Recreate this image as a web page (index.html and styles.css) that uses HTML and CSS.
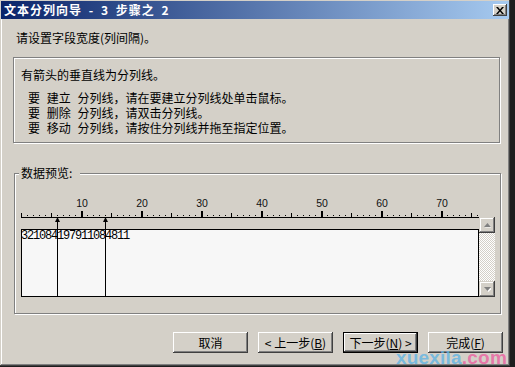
FILE: index.html
```html
<!DOCTYPE html>
<html lang="zh-CN">
<head>
  <meta charset="UTF-8">
  <title>文本分列向导</title>
  <link rel="stylesheet" href="styles.css">
</head>
<body>
  <div class="window">
    <div class="titlebar">
      <span class="title">文本分列向导 - 3 步骤之 2</span>
      <span class="close">
        <svg width="8" height="7" viewBox="0 0 8 7"><path d="M0 0h2l2 2.5L6 0h2L5 3.5 8 7H6L4 4.5 2 7H0l3-3.5z" fill="#000"/></svg>
      </span>
    </div>

    <div class="content">
      <p class="intro">请设置字段宽度(列间隔)。</p>

      <div class="info">
        <p>有箭头的垂直线为分列线。</p>
        <ul>
          <li>要 建立 分列线，请在要建立分列线处单击鼠标。</li>
          <li>要 删除 分列线，请双击分列线。</li>
          <li>要 移动 分列线，请按住分列线并拖至指定位置。</li>
        </ul>
      </div>

      <div class="group">
        <div class="group-title">数据预览:</div>
        <div class="viewer">
          <div class="viewer-main">
            <svg class="ruler" width="458" height="33" viewBox="0 0 458 33">
              <defs>
                <pattern id="dots" patternUnits="userSpaceOnUse" width="6" height="1"><rect width="1" height="1" fill="#000"/></pattern>
                <pattern id="fives" patternUnits="userSpaceOnUse" x="30" width="60" height="4"><rect width="1" height="4" fill="#000"/></pattern>
                <pattern id="tens" patternUnits="userSpaceOnUse" width="60" height="6"><rect width="2" height="6" fill="#000"/></pattern>
              </defs>
              <rect x="0" y="19" width="458" height="1" fill="url(#dots)"/>
              <rect x="30" y="17" width="428" height="4" fill="url(#fives)"/>
              <rect x="60" y="15" width="398" height="6" fill="url(#tens)"/>
              <rect x="0" y="17" width="1" height="4" fill="#000"/>
              <rect x="0" y="21" width="458" height="1" fill="#000"/>
              <g class="ruler-nums" text-anchor="middle">
                <text x="61" y="11">10</text>
                <text x="121" y="11">20</text>
                <text x="181" y="11">30</text>
                <text x="241" y="11">40</text>
                <text x="301" y="11">50</text>
                <text x="361" y="11">60</text>
                <text x="421" y="11">70</text>
              </g>
              <path d="M36.5 21V33M84.5 21V33" stroke="#000"/>
              <path d="M34 26L36.5 21 39 26zM82 26L84.5 21 87 26z" fill="#000"/>
            </svg>
            <div class="data">
              <div class="data-row">321084197911084811</div>
              <span class="break b1"></span>
              <span class="break b2"></span>
            </div>
          </div>
          <div class="scrollbar">
            <span class="sb-btn">
              <svg width="7" height="5" viewBox="0 0 7 5"><path d="M4.5 1L8 4.5H1z" fill="#fff"/><path d="M3.5 0L7 4H0z" fill="#808080"/></svg>
            </span>
            <span class="sb-btn">
              <svg width="7" height="5" viewBox="0 0 7 5"><path d="M1 1h7L4.5 5z" fill="#fff"/><path d="M0 0h7L3.5 4z" fill="#808080"/></svg>
            </span>
          </div>
        </div>
      </div>

      <div class="buttons">
        <button class="button">取消</button>
        <button class="button">&lt; 上一步(<u>B</u>)</button>
        <button class="button default">下一步(<u>N</u>) &gt;</button>
        <button class="button">完成(<u>F</u>)</button>
      </div>
    </div>

    <div class="watermark"><span class="wm-a">xuexila</span><span class="wm-b">.com</span></div>
  </div>
</body>
</html>
```

FILE: styles.css
```css
html, body {
  margin: 0;
  padding: 0;
}

body {
  width: 515px;
  height: 367px;
  overflow: hidden;
  background-color: #1e1e1e;
  font-family: "Noto Sans CJK SC", "Liberation Sans", sans-serif;
  font-size: 12px;
  color: #000;
}

.window {
  position: relative;
  width: 510px;
  height: 366px;
  box-sizing: border-box;
  padding: 1px;
  background-color: #d4d0c8;
  box-shadow: inset -1px -1px #404040, inset 1px 1px #d4d0c8, inset -2px -2px #808080, inset 2px 2px #fff;
}

.titlebar {
  height: 18px;
  display: flex;
  align-items: center;
  justify-content: space-between;
  padding-left: 3px;
  background: linear-gradient(to right, #0a246a, #a6caf0);
  color: #fff;
  font-weight: bold;
  letter-spacing: 1px;
  word-spacing: 3px;
  line-height: 18px;
}

.close {
  width: 14px;
  height: 12px;
  margin-right: 2px;
  display: flex;
  align-items: center;
  justify-content: center;
  background-color: #d4d0c8;
  box-shadow: inset -1px -1px #404040, inset 1px 1px #fff, inset -2px -2px #808080;
}

.content {
  padding: 12px 6px 0 12px;
}

.intro {
  margin: 0 0 0 3px;
  line-height: 14px;
}

.info {
  margin-top: 12px;
  width: 487px;
  height: 86px;
  box-sizing: border-box;
  padding: 9px 0 0 7px;
  border: 1px solid #808080;
  box-shadow: inset 1px 1px #fff, 1px 1px #fff;
}

.info p {
  margin: 0;
  line-height: 15px;
}

.info ul {
  margin: 8px 0 0;
  padding-left: 7px;
  list-style: none;
  line-height: 15px;
  word-spacing: 4px;
}

.group {
  margin: 30px 0 0 1px;
  width: 487px;
  height: 141px;
  box-sizing: border-box;
  padding-left: 6px;
  border: 1px solid #808080;
  box-shadow: inset 1px 1px #fff, 1px 1px #fff;
}

.group-title {
  display: table;
  margin: -8px 0 0 -2px;
  padding: 0 8px 0 2px;
  line-height: 14px;
  background-color: #d4d0c8;
}

.viewer {
  display: flex;
  align-items: flex-end;
  margin-top: 16px;
}

.viewer-main {
  width: 458px;
}

.ruler {
  display: block;
}

.ruler-nums {
  font-family: "Liberation Sans", sans-serif;
  font-size: 10.5px;
  fill: #111;
}

.data {
  position: relative;
  height: 68px;
  box-sizing: border-box;
  border: 1px solid #000;
  background-color: #f7f7f7;
}

.data-row {
  font-family: "Liberation Mono", monospace;
  font-size: 12px;
  letter-spacing: -1.2px;
  line-height: 12px;
  margin-left: -1px;
}

.break {
  position: absolute;
  top: 0;
  bottom: 0;
  width: 1px;
  background-color: #000;
}

.b1 { left: 35px; }
.b2 { left: 83px; }

.scrollbar {
  width: 16px;
  height: 80px;
  display: flex;
  flex-direction: column;
  justify-content: space-between;
  background: repeating-conic-gradient(#fff 0 25%, #d4d0c8 0 50%) 0 0 / 2px 2px;
}

.sb-btn {
  width: 16px;
  height: 16px;
  display: flex;
  align-items: center;
  justify-content: center;
  background-color: #d4d0c8;
  box-shadow: inset -1px -1px #404040, inset 1px 1px #d4d0c8, inset -2px -2px #808080, inset 2px 2px #fff;
}

.buttons {
  display: flex;
  justify-content: flex-end;
  gap: 10px;
  margin-top: 18px;
}

.button {
  width: 75px;
  height: 21px;
  padding: 0;
  border: none;
  background-color: #d4d0c8;
  font-family: "Noto Sans CJK SC", "Liberation Sans", sans-serif;
  font-size: 12px;
  line-height: 21px;
  color: #000;
  box-shadow: inset -1px -1px #404040, inset 1px 1px #fff, inset -2px -2px #808080, inset 2px 2px #d4d0c8;
}

.button.default {
  border: 1px solid #000;
  line-height: 19px;
}

.watermark {
  position: absolute;
  right: 3px;
  bottom: 0;
  font-family: "Liberation Sans", sans-serif;
  font-weight: bold;
  font-size: 19px;
  letter-spacing: 0.2px;
  line-height: 17px;
}

.wm-a { color: rgba(96, 180, 228, 0.8); }
.wm-b { color: rgba(236, 96, 160, 0.8); }
```
